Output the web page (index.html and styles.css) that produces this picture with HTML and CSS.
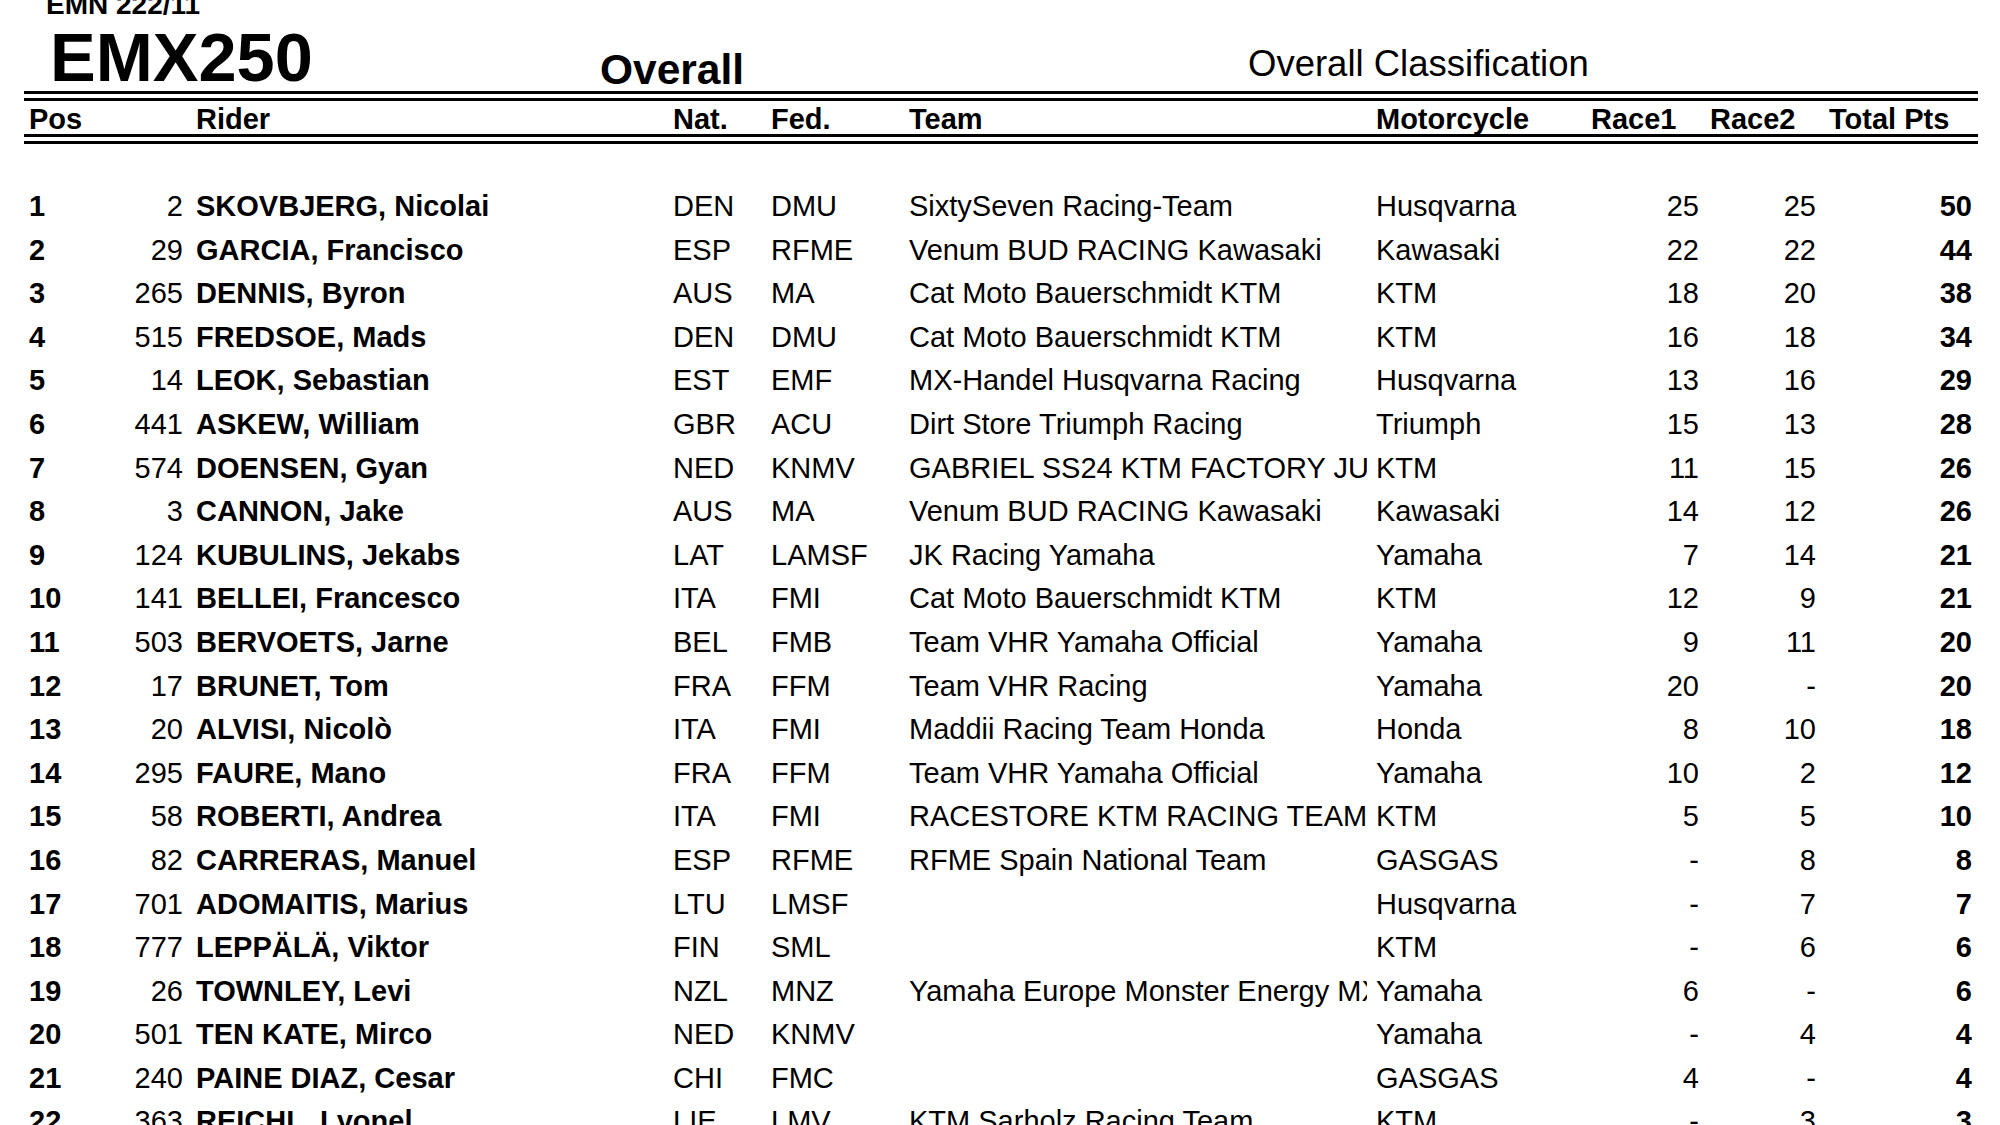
FILE: index.html
```html
<!DOCTYPE html>
<html lang="en">
<head>
<meta charset="utf-8">
<title>EMX250 Overall Classification</title>
<link rel="stylesheet" href="styles.css">
</head>
<body>
<div class="page">
  <header class="top">
    <div class="brand">
      <div class="code">EMN 222/11</div>
      <div class="series">EMX250</div>
    </div>
    <div class="session">Overall</div>
    <div class="title">Overall Classification</div>
  </header>
  <div class="dline"></div>
  <div class="row head">
    <div class="c-pos">Pos</div>
    <div class="c-num"></div>
    <div class="c-rider">Rider</div>
    <div class="c-nat">Nat.</div>
    <div class="c-fed">Fed.</div>
    <div class="c-team">Team</div>
    <div class="c-moto">Motorcycle</div>
    <div class="c-r1">Race1</div>
    <div class="c-r2">Race2</div>
    <div class="c-tot">Total Pts</div>
  </div>
  <div class="dline"></div>
  <div class="body">
    <div class="row"><div class="c-pos">1</div><div class="c-num">2</div><div class="c-rider">SKOVBJERG, Nicolai</div><div class="c-nat">DEN</div><div class="c-fed">DMU</div><div class="c-team">SixtySeven Racing-Team</div><div class="c-moto">Husqvarna</div><div class="c-r1">25</div><div class="c-r2">25</div><div class="c-tot">50</div></div>
    <div class="row"><div class="c-pos">2</div><div class="c-num">29</div><div class="c-rider">GARCIA, Francisco</div><div class="c-nat">ESP</div><div class="c-fed">RFME</div><div class="c-team">Venum BUD RACING Kawasaki</div><div class="c-moto">Kawasaki</div><div class="c-r1">22</div><div class="c-r2">22</div><div class="c-tot">44</div></div>
    <div class="row"><div class="c-pos">3</div><div class="c-num">265</div><div class="c-rider">DENNIS, Byron</div><div class="c-nat">AUS</div><div class="c-fed">MA</div><div class="c-team">Cat Moto Bauerschmidt KTM</div><div class="c-moto">KTM</div><div class="c-r1">18</div><div class="c-r2">20</div><div class="c-tot">38</div></div>
    <div class="row"><div class="c-pos">4</div><div class="c-num">515</div><div class="c-rider">FREDSOE, Mads</div><div class="c-nat">DEN</div><div class="c-fed">DMU</div><div class="c-team">Cat Moto Bauerschmidt KTM</div><div class="c-moto">KTM</div><div class="c-r1">16</div><div class="c-r2">18</div><div class="c-tot">34</div></div>
    <div class="row"><div class="c-pos">5</div><div class="c-num">14</div><div class="c-rider">LEOK, Sebastian</div><div class="c-nat">EST</div><div class="c-fed">EMF</div><div class="c-team">MX-Handel Husqvarna Racing</div><div class="c-moto">Husqvarna</div><div class="c-r1">13</div><div class="c-r2">16</div><div class="c-tot">29</div></div>
    <div class="row"><div class="c-pos">6</div><div class="c-num">441</div><div class="c-rider">ASKEW, William</div><div class="c-nat">GBR</div><div class="c-fed">ACU</div><div class="c-team">Dirt Store Triumph Racing</div><div class="c-moto">Triumph</div><div class="c-r1">15</div><div class="c-r2">13</div><div class="c-tot">28</div></div>
    <div class="row"><div class="c-pos">7</div><div class="c-num">574</div><div class="c-rider">DOENSEN, Gyan</div><div class="c-nat">NED</div><div class="c-fed">KNMV</div><div class="c-team">GABRIEL SS24 KTM FACTORY JUNIOR TEAM</div><div class="c-moto">KTM</div><div class="c-r1">11</div><div class="c-r2">15</div><div class="c-tot">26</div></div>
    <div class="row"><div class="c-pos">8</div><div class="c-num">3</div><div class="c-rider">CANNON, Jake</div><div class="c-nat">AUS</div><div class="c-fed">MA</div><div class="c-team">Venum BUD RACING Kawasaki</div><div class="c-moto">Kawasaki</div><div class="c-r1">14</div><div class="c-r2">12</div><div class="c-tot">26</div></div>
    <div class="row"><div class="c-pos">9</div><div class="c-num">124</div><div class="c-rider">KUBULINS, Jekabs</div><div class="c-nat">LAT</div><div class="c-fed">LAMSF</div><div class="c-team">JK Racing Yamaha</div><div class="c-moto">Yamaha</div><div class="c-r1">7</div><div class="c-r2">14</div><div class="c-tot">21</div></div>
    <div class="row"><div class="c-pos">10</div><div class="c-num">141</div><div class="c-rider">BELLEI, Francesco</div><div class="c-nat">ITA</div><div class="c-fed">FMI</div><div class="c-team">Cat Moto Bauerschmidt KTM</div><div class="c-moto">KTM</div><div class="c-r1">12</div><div class="c-r2">9</div><div class="c-tot">21</div></div>
    <div class="row"><div class="c-pos">11</div><div class="c-num">503</div><div class="c-rider">BERVOETS, Jarne</div><div class="c-nat">BEL</div><div class="c-fed">FMB</div><div class="c-team">Team VHR Yamaha Official</div><div class="c-moto">Yamaha</div><div class="c-r1">9</div><div class="c-r2">11</div><div class="c-tot">20</div></div>
    <div class="row"><div class="c-pos">12</div><div class="c-num">17</div><div class="c-rider">BRUNET, Tom</div><div class="c-nat">FRA</div><div class="c-fed">FFM</div><div class="c-team">Team VHR Racing</div><div class="c-moto">Yamaha</div><div class="c-r1">20</div><div class="c-r2">-</div><div class="c-tot">20</div></div>
    <div class="row"><div class="c-pos">13</div><div class="c-num">20</div><div class="c-rider">ALVISI, Nicolò</div><div class="c-nat">ITA</div><div class="c-fed">FMI</div><div class="c-team">Maddii Racing Team Honda</div><div class="c-moto">Honda</div><div class="c-r1">8</div><div class="c-r2">10</div><div class="c-tot">18</div></div>
    <div class="row"><div class="c-pos">14</div><div class="c-num">295</div><div class="c-rider">FAURE, Mano</div><div class="c-nat">FRA</div><div class="c-fed">FFM</div><div class="c-team">Team VHR Yamaha Official</div><div class="c-moto">Yamaha</div><div class="c-r1">10</div><div class="c-r2">2</div><div class="c-tot">12</div></div>
    <div class="row"><div class="c-pos">15</div><div class="c-num">58</div><div class="c-rider">ROBERTI, Andrea</div><div class="c-nat">ITA</div><div class="c-fed">FMI</div><div class="c-team">RACESTORE KTM RACING TEAM</div><div class="c-moto">KTM</div><div class="c-r1">5</div><div class="c-r2">5</div><div class="c-tot">10</div></div>
    <div class="row"><div class="c-pos">16</div><div class="c-num">82</div><div class="c-rider">CARRERAS, Manuel</div><div class="c-nat">ESP</div><div class="c-fed">RFME</div><div class="c-team">RFME Spain National Team</div><div class="c-moto">GASGAS</div><div class="c-r1">-</div><div class="c-r2">8</div><div class="c-tot">8</div></div>
    <div class="row"><div class="c-pos">17</div><div class="c-num">701</div><div class="c-rider">ADOMAITIS, Marius</div><div class="c-nat">LTU</div><div class="c-fed">LMSF</div><div class="c-team"></div><div class="c-moto">Husqvarna</div><div class="c-r1">-</div><div class="c-r2">7</div><div class="c-tot">7</div></div>
    <div class="row"><div class="c-pos">18</div><div class="c-num">777</div><div class="c-rider">LEPPÄLÄ, Viktor</div><div class="c-nat">FIN</div><div class="c-fed">SML</div><div class="c-team"></div><div class="c-moto">KTM</div><div class="c-r1">-</div><div class="c-r2">6</div><div class="c-tot">6</div></div>
    <div class="row"><div class="c-pos">19</div><div class="c-num">26</div><div class="c-rider">TOWNLEY, Levi</div><div class="c-nat">NZL</div><div class="c-fed">MNZ</div><div class="c-team">Yamaha Europe Monster Energy MX2</div><div class="c-moto">Yamaha</div><div class="c-r1">6</div><div class="c-r2">-</div><div class="c-tot">6</div></div>
    <div class="row"><div class="c-pos">20</div><div class="c-num">501</div><div class="c-rider">TEN KATE, Mirco</div><div class="c-nat">NED</div><div class="c-fed">KNMV</div><div class="c-team"></div><div class="c-moto">Yamaha</div><div class="c-r1">-</div><div class="c-r2">4</div><div class="c-tot">4</div></div>
    <div class="row"><div class="c-pos">21</div><div class="c-num">240</div><div class="c-rider">PAINE DIAZ, Cesar</div><div class="c-nat">CHI</div><div class="c-fed">FMC</div><div class="c-team"></div><div class="c-moto">GASGAS</div><div class="c-r1">4</div><div class="c-r2">-</div><div class="c-tot">4</div></div>
    <div class="row"><div class="c-pos">22</div><div class="c-num">363</div><div class="c-rider">REICHL, Lyonel</div><div class="c-nat">LIE</div><div class="c-fed">LMV</div><div class="c-team">KTM Sarholz Racing Team</div><div class="c-moto">KTM</div><div class="c-r1">-</div><div class="c-r2">3</div><div class="c-tot">3</div></div>
  </div>
</div>
</body>
</html>
```
FILE: styles.css
```css
html, body {
  margin: 0;
  padding: 0;
  background: #ffffff;
}
body {
  width: 2000px;
  height: 1125px;
  overflow: hidden;
  color: #000;
  font-family: "Liberation Sans", Arial, Helvetica, sans-serif;
}
.page {
  padding-left: 24px;
  width: 1954px;
}
.top {
  display: flex;
  height: 91px;
  align-items: flex-start;
}
.brand {
  width: 576px;
  padding-left: 26px;
  box-sizing: border-box;
}
.code {
  font-weight: bold;
  font-size: 28px;
  line-height: 28px;
  margin-top: -9px;
  margin-left: -4px;
  white-space: nowrap;
}
.series {
  font-weight: bold;
  font-size: 68.5px;
  line-height: 68px;
  margin-top: 5px;
  white-space: nowrap;
}
.session {
  width: 648px;
  font-weight: bold;
  font-size: 42.5px;
  line-height: 42px;
  margin-top: 49px;
  white-space: nowrap;
}
.title {
  font-size: 36.5px;
  line-height: 36px;
  margin-top: 46px;
  white-space: nowrap;
}
.dline {
  height: 10px;
  box-sizing: border-box;
  border-top: 3px solid #000;
  border-bottom: 3px solid #000;
}
.row {
  display: grid;
  grid-template-columns: 86px 73px 490px 98px 138px 458px 224px 108px 117px 156px;
  font-size: 29px;
  line-height: 43.6px;
  white-space: nowrap;
}
.row > div {
  overflow: hidden;
}
.head {
  font-weight: bold;
  line-height: 31px;
  padding-top: 3px;
  height: 33px;
  box-sizing: border-box;
}
.body {
  padding-top: 41px;
}
.c-pos {
  padding-left: 5px;
  font-weight: bold;
}
.c-num {
  text-align: right;
}
.c-rider {
  padding-left: 13px;
  font-weight: bold;
}
.c-moto {
  padding-left: 9px;
}
.c-r1, .c-r2, .c-tot {
  text-align: right;
}
.c-tot {
  font-weight: bold;
}
.head .c-r1 {
  text-align: left;
}
.head .c-r2 {
  text-align: left;
  padding-left: 11px;
}
.head .c-tot {
  text-align: left;
  padding-left: 13px;
}
```
